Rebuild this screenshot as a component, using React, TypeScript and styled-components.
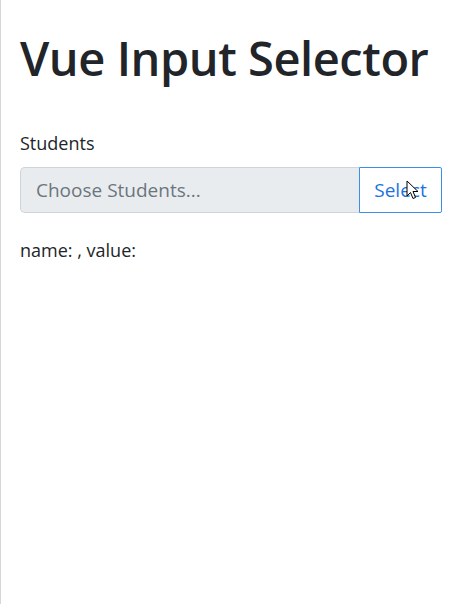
import React from "react";
import styled, { createGlobalStyle } from "styled-components";

const Global = createGlobalStyle`
  html, body { margin: 0; padding: 0; background: #fff; }
  body {
    font-family: "Open Sans", "Noto Sans", sans-serif;
    color: #212529;
    min-height: 604px;
    box-sizing: border-box;
    border-left: 1px solid #d6d6d6;
  }
  * { box-sizing: border-box; }
`;

const Page = styled.div`
  padding: 30px 14px 0 19px;
  display: flex;
  flex-direction: column;
`;

const Title = styled.h1`
  margin: 0 0 44px;
  font-size: 47px;
  font-weight: 600;
  line-height: 1.2;
  letter-spacing: -0.45px;
  white-space: nowrap;
`;

const Label = styled.label`
  font-size: 18px;
  line-height: 1.5;
  margin-bottom: 10px;
`;

const InputGroup = styled.div`
  display: flex;
  width: 422px;
  height: 46px;
  position: relative;
`;

const Field = styled.input`
  flex: 1;
  min-width: 0;
  height: 100%;
  border: 1px solid #ced4da;
  border-right: none;
  border-radius: 5px 0 0 5px;
  background: #e9ecef;
  padding: 0 15px;
  font-family: inherit;
  font-size: 19px;
  color: #495057;
  &::placeholder { color: #6c757d; }
`;

const Button = styled.button`
  width: 83px;
  height: 100%;
  border: 1px solid #3b8fe6;
  border-radius: 0 2px 2px 0;
  background: #fff;
  color: #1a73e0;
  font-family: inherit;
  font-size: 19px;
  padding: 0;
`;

const Cursor = styled.svg`
  position: absolute;
  left: 386px;
  top: 13px;
  pointer-events: none;
`;

const Output = styled.p`
  margin: 24px 0 0;
  font-size: 18px;
  line-height: 1.5;
`;

export default function App() {
  return (
    <>
      <Global />
      <Page>
        <Title>Vue Input Selector</Title>
        <Label htmlFor="students">Students</Label>
        <InputGroup>
          <Field id="students" placeholder="Choose Students..." disabled />
          <Button type="button">Select</Button>
          <Cursor width="14" height="21" viewBox="0 0 14 21">
            <path d="M1 1 L1 16 L4.5 12.5 L7 18.5 L9.5 17.5 L7 11.5 L12 11.5 Z" fill="#fff" stroke="#000" strokeWidth="1" strokeLinejoin="round" />
          </Cursor>
        </InputGroup>
        <Output>name: , value:</Output>
      </Page>
    </>
  );
}
